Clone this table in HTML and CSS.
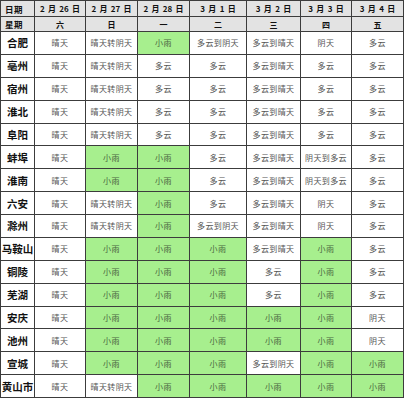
FILE: index.html
```html
<!DOCTYPE html>
<html lang="zh-CN">
<head>
<meta charset="utf-8">
<link rel="stylesheet" href="styles.css">
</head>
<body>
<div class="table">
  <div class="h lead">日期</div><div class="h">2 月 26 日</div><div class="h">2 月 27 日</div><div class="h">2 月 28 日</div><div class="h">3 月 1 日</div><div class="h">3 月 2 日</div><div class="h">3 月 3 日</div><div class="h">3 月 4 日</div>
  <div class="h lead">星期</div><div class="h">六</div><div class="h">日</div><div class="h">一</div><div class="h">二</div><div class="h">三</div><div class="h">四</div><div class="h">五</div>

  <div class="city">合肥</div><div class="c">晴天</div><div class="c">晴天转阴天</div><div class="c g">小雨</div><div class="c">多云到阴天</div><div class="c">多云到晴天</div><div class="c">阴天</div><div class="c">多云</div>
  <div class="city">亳州</div><div class="c">晴天</div><div class="c">晴天转阴天</div><div class="c">多云</div><div class="c">多云</div><div class="c">多云到晴天</div><div class="c">多云</div><div class="c">多云</div>
  <div class="city">宿州</div><div class="c">晴天</div><div class="c">晴天转阴天</div><div class="c">多云</div><div class="c">多云</div><div class="c">多云到晴天</div><div class="c">多云</div><div class="c">多云</div>
  <div class="city">淮北</div><div class="c">晴天</div><div class="c">晴天转阴天</div><div class="c">多云</div><div class="c">多云</div><div class="c">多云到晴天</div><div class="c">多云</div><div class="c">多云</div>
  <div class="city">阜阳</div><div class="c">晴天</div><div class="c">晴天转阴天</div><div class="c">多云</div><div class="c">多云</div><div class="c">多云到晴天</div><div class="c">多云</div><div class="c">多云</div>
  <div class="city">蚌埠</div><div class="c">晴天</div><div class="c g">小雨</div><div class="c g">小雨</div><div class="c">多云</div><div class="c">多云到晴天</div><div class="c">阴天到多云</div><div class="c">多云</div>
  <div class="city">淮南</div><div class="c">晴天</div><div class="c g">小雨</div><div class="c g">小雨</div><div class="c">多云</div><div class="c">多云到晴天</div><div class="c">阴天到多云</div><div class="c">多云</div>
  <div class="city">六安</div><div class="c">晴天</div><div class="c">晴天转阴天</div><div class="c g">小雨</div><div class="c">多云</div><div class="c">多云到晴天</div><div class="c">阴天</div><div class="c">多云</div>
  <div class="city">滁州</div><div class="c">晴天</div><div class="c">晴天转阴天</div><div class="c g">小雨</div><div class="c">多云到阴天</div><div class="c">多云到晴天</div><div class="c">阴天</div><div class="c">多云</div>
  <div class="city">马鞍山</div><div class="c">晴天</div><div class="c g">小雨</div><div class="c g">小雨</div><div class="c g">小雨</div><div class="c">多云到晴天</div><div class="c g">小雨</div><div class="c">多云</div>
  <div class="city">铜陵</div><div class="c">晴天</div><div class="c g">小雨</div><div class="c g">小雨</div><div class="c g">小雨</div><div class="c">多云</div><div class="c g">小雨</div><div class="c">多云</div>
  <div class="city">芜湖</div><div class="c">晴天</div><div class="c g">小雨</div><div class="c g">小雨</div><div class="c g">小雨</div><div class="c">多云</div><div class="c g">小雨</div><div class="c">多云</div>
  <div class="city">安庆</div><div class="c">晴天</div><div class="c g">小雨</div><div class="c g">小雨</div><div class="c g">小雨</div><div class="c g">小雨</div><div class="c g">小雨</div><div class="c">阴天</div>
  <div class="city">池州</div><div class="c">晴天</div><div class="c g">小雨</div><div class="c g">小雨</div><div class="c g">小雨</div><div class="c g">小雨</div><div class="c g">小雨</div><div class="c">阴天</div>
  <div class="city">宣城</div><div class="c">晴天</div><div class="c g">小雨</div><div class="c g">小雨</div><div class="c g">小雨</div><div class="c">多云到阴天</div><div class="c g">小雨</div><div class="c g">小雨</div>
  <div class="city">黄山市</div><div class="c">晴天</div><div class="c">晴天转阴天</div><div class="c g">小雨</div><div class="c g">小雨</div><div class="c g">小雨</div><div class="c g">小雨</div><div class="c g">小雨</div>
</div>
</body>
</html>
```

FILE: styles.css
```css
html, body {
  margin: 0;
  padding: 0;
  background: #ffffff;
}

.table {
  display: grid;
  width: max-content;
  grid-template-columns: 33px 50px 51px 51px 56px 53px 50px 51px;
  grid-template-rows: 15px 14px repeat(16, 21.875px);
  gap: 1px;
  padding: 1px;
  background: #3c3c3c;
  box-shadow: 0 1px 0 #c8c8c8;
  font-family: "Noto Sans CJK SC", "Noto Sans", sans-serif;
}

.table > div {
  display: flex;
  align-items: center;
  justify-content: center;
  white-space: nowrap;
  overflow: hidden;
}

.h {
  background: #e3e3e3;
  color: #111;
  font-size: 8px;
  font-weight: 700;
  word-spacing: 1.5px;
}

.h.lead {
  justify-content: flex-start;
  padding-left: 4px;
  font-size: 8.5px;
  letter-spacing: 0.5px;
}

.city {
  background: #ffffff;
  color: #111;
  font-size: 10.5px;
  font-weight: 700;
}

.c {
  background: #ffffff;
  color: #555;
  font-size: 8px;
  letter-spacing: 0.4px;
}

.c.g {
  background: #a7ef8e;
  color: #4a6640;
}
```
